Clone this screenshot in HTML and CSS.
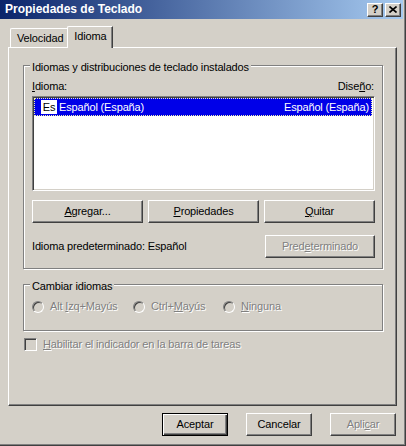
FILE: index.html
```html
<!DOCTYPE html>
<html lang="es">
<head>
  <meta charset="UTF-8" />
  <title>Propiedades de Teclado</title>
  <link rel="stylesheet" href="styles.css">
</head>
<body>

<div class="window">
  <div class="titlebar">
    <span class="title">Propiedades de Teclado</span>
    <div class="caption-buttons">
      <span class="cap-btn help">?</span>
      <span class="cap-btn close">
        <svg width="8" height="7" viewBox="0 0 8 7">
          <path d="M0.5 0.5 L7.5 6.5 M7.5 0.5 L0.5 6.5" stroke="#000" stroke-width="1.6" fill="none" />
        </svg>
      </span>
    </div>
  </div>

  <div class="tabs">
    <div class="tab">Velocidad</div>
    <div class="tab active">Idioma</div>
  </div>

  <div class="panel">
    <div class="group group-langs">
      <div class="group-title">Idiomas y distribuciones de teclado instalados</div>
      <div class="list-head">
        <span><u>I</u>dioma:</span>
        <span>Dise<u>ñ</u>o:</span>
      </div>
      <div class="listbox">
        <div class="list-item selected">
          <span class="lang-icon">Es</span>
          <span class="lang-name">Español (España)</span>
          <span class="layout-name">Español (España)</span>
        </div>
      </div>
      <div class="btn-row">
        <button class="btn"><u>A</u>gregar...</button>
        <button class="btn"><u>P</u>ropiedades</button>
        <button class="btn"><u>Q</u>uitar</button>
      </div>
      <div class="default-row">
        <span>Idioma predeterminado: Español</span>
        <button class="btn disabled">Pred<u>e</u>terminado</button>
      </div>
    </div>

    <div class="group group-hotkeys">
      <div class="group-title">Cambiar idiomas</div>
      <div class="radio-row">
        <label class="radio disabled r-alt"><span class="radio-dot"></span><span>Alt <u>I</u>zq+Mayús</span></label>
        <label class="radio disabled r-ctrl"><span class="radio-dot"></span><span>Ctrl+<u>M</u>ayús</span></label>
        <label class="radio disabled"><span class="radio-dot"></span><span><u>N</u>inguna</span></label>
      </div>
    </div>

    <label class="check disabled"><span class="check-box"></span><span><u>H</u>abilitar el indicador en la barra de tareas</span></label>
  </div>

  <div class="dialog-buttons">
    <button class="btn default">Aceptar</button>
    <button class="btn">Cancelar</button>
    <button class="btn disabled">Apli<u>c</u>ar</button>
  </div>
</div>

</body>
</html>
```

FILE: styles.css
```css
body {
  margin: 0;
  background: #d4d0c8;
  font-family: "Liberation Sans", Arial, sans-serif;
  font-size: 11px;
  line-height: 13px;
  letter-spacing: -0.15px;
  color: #000;
}
.window {
  width: 406px;
  height: 446px;
  box-sizing: border-box;
  background: #d4d0c8;
  border-right: 1px solid #404040;
  border-bottom: 1px solid #404040;
  box-shadow: inset -1px -1px #808080;
}
.titlebar {
  height: 19px;
  margin-right: 2px;
  display: flex;
  align-items: center;
  justify-content: space-between;
  padding-left: 5px;
  background: linear-gradient(to right, #0a246a, #a6caf0);
}
.title {
  color: #fff;
  font-weight: bold;
  font-size: 12px;
  letter-spacing: 0;
}
.caption-buttons {
  display: flex;
  gap: 2px;
  margin-right: 2px;
}
.cap-btn {
  width: 16px;
  height: 14px;
  box-sizing: border-box;
  display: flex;
  align-items: center;
  justify-content: center;
  background: #d4d0c8;
  border: 1px solid;
  border-color: #fff #404040 #404040 #fff;
  box-shadow: inset -1px -1px #808080;
  font-weight: bold;
  font-size: 11px;
}

/* tabs */
.tabs {
  display: flex;
  align-items: flex-end;
  margin-top: 7px;
  padding-left: 10px;
}
.tab {
  height: 19px;
  box-sizing: border-box;
  padding: 3px 5px 2px 6px;
  border-top: 1px solid #fff;
  border-left: 1px solid #fff;
  border-right: 1px solid #404040;
  border-top-left-radius: 2px;
  box-shadow: inset -1px 0 #808080;
  background: #d4d0c8;
}
.tab.active {
  position: relative;
  z-index: 1;
  height: 22px;
  width: 46px;
  margin-left: -2px;
  margin-bottom: -1px;
  padding: 3px 0 5px 6px;
}

.panel {
  margin-left: 8px;
  width: 389px;
  height: 359px;
  box-sizing: border-box;
  border-top: 1px solid #fff;
  border-left: 1px solid #fff;
  border-right: 1px solid #404040;
  border-bottom: 1px solid #404040;
  box-shadow: inset -1px -1px #808080;
  overflow: hidden;
}

/* group boxes */
.group {
  width: 360px;
  box-sizing: border-box;
  margin-left: 14px;
  border: 1px solid #808080;
  box-shadow: inset 1px 1px #fff, 1px 1px #fff;
  padding: 0 7px 10px 8px;
}
.group-langs {
  margin-top: 17px;
}
.group-hotkeys {
  margin-top: 15px;
  padding-bottom: 17px;
}
.group-title {
  display: table;
  margin: -5px 0 0 -2px;
  padding: 0 2px;
  background: #d4d0c8;
}
.list-head {
  display: flex;
  justify-content: space-between;
  margin-top: 6px;
  padding-right: 1px;
}
.listbox {
  margin-top: 3px;
  height: 95px;
  box-sizing: border-box;
  background: #fff;
  border: 1px solid;
  border-color: #808080 #fff #fff #808080;
  box-shadow: inset 1px 1px #404040, inset -1px -1px #d4d0c8;
  padding: 1px 2px 0 1px;
}
.list-item {
  height: 18px;
  display: flex;
  align-items: center;
  padding: 0 3px 0 7px;
}
.list-item.selected {
  background: #0000e8;
  color: #fff;
  outline: 1px dotted #f0f0b0;
  outline-offset: -1px;
}
.lang-icon {
  width: 16px;
  height: 14px;
  background: #fff;
  color: #000;
  display: flex;
  align-items: center;
  justify-content: center;
  margin-right: 2px;
}
.lang-name {
  flex: 1;
}

/* buttons */
.btn {
  height: 23px;
  box-sizing: border-box;
  padding: 0;
  font: inherit;
  letter-spacing: inherit;
  color: #000;
  background: #d4d0c8;
  border: 1px solid;
  border-color: #fff #404040 #404040 #fff;
  box-shadow: inset -1px -1px #808080;
}
.btn.disabled {
  color: #808080;
  text-shadow: 1px 1px #fff;
}
.btn.default {
  border-color: #000;
  box-shadow: inset 1px 1px #fff, inset -1px -1px #404040, inset -2px -2px #808080;
}
.btn-row {
  display: flex;
  gap: 5px;
  margin-top: 9px;
}
.btn-row .btn {
  flex: 1;
}
.default-row {
  display: flex;
  align-items: center;
  justify-content: space-between;
  margin-top: 12px;
}
.default-row .btn {
  width: 110px;
}

/* radios and checkbox */
.disabled {
  color: #808080;
  text-shadow: 1px 1px #fff;
}
.radio-row {
  display: flex;
  margin-top: 7px;
}
.radio {
  display: flex;
  align-items: center;
  gap: 6px;
}
.r-alt {
  width: 101px;
}
.r-ctrl {
  width: 90px;
}
.radio-dot {
  width: 12px;
  height: 12px;
  box-sizing: border-box;
  border-radius: 50%;
  border: 1px solid;
  border-color: #808080 #fff #fff #808080;
  box-shadow: inset 1px 1px #404040, inset -1px -1px #d4d0c8;
  background: #d4d0c8;
}
.check {
  display: flex;
  align-items: center;
  gap: 6px;
  margin: 7px 0 0 15px;
}
.check-box {
  width: 13px;
  height: 13px;
  box-sizing: border-box;
  border: 1px solid;
  border-color: #808080 #fff #fff #808080;
  box-shadow: inset 1px 1px #404040, inset -1px -1px #d4d0c8;
  background: #d4d0c8;
}

.dialog-buttons {
  display: flex;
  justify-content: flex-end;
  gap: 18px;
  margin-top: 7px;
  padding-right: 9px;
}
.dialog-buttons .btn {
  width: 66px;
}
```
